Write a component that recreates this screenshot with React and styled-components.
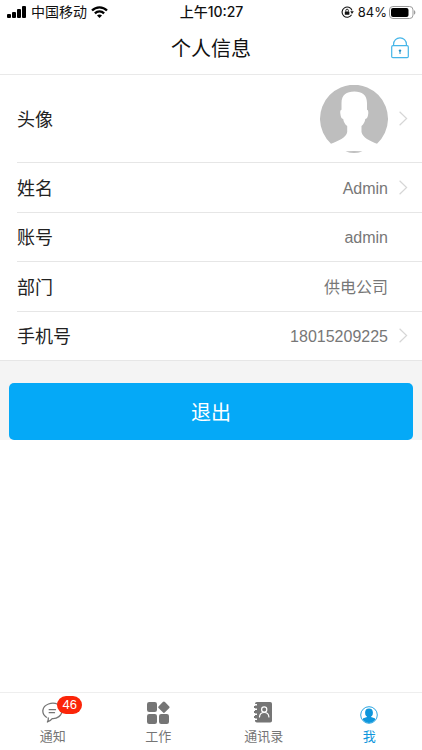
import React from "react";
import styled, { createGlobalStyle } from "styled-components";

const Global = createGlobalStyle`
  *, *::before, *::after { box-sizing: border-box; }
  body {
    margin: 0;
    background: #fff;
    color: #222;
    font-family: "Liberation Sans", "Noto Sans CJK SC", sans-serif;
  }
  h1, dl, dt, dd { margin: 0; font-weight: 400; }
  svg { display: block; }
`;

const Page = styled.div`
  min-height: 100vh;
  display: flex;
  flex-direction: column;
`;

const StatusBar = styled.div`
  height: 24px;
  padding: 0 6px 0 7px;
  display: grid;
  grid-template-columns: 1fr auto 1fr;
  align-items: center;
  color: #111;
  font-family: Inter, "Noto Sans CJK SC", sans-serif;
  font-size: 13px;
  line-height: 20px;
`;

const StatusGroup = styled.div`
  display: flex;
  align-items: center;
  gap: ${(p) => p.$gap}px;
  justify-content: ${(p) => (p.$end ? "flex-end" : "flex-start")};
`;

const Carrier = styled.span`
  font-size: 14px;
`;

const Clock = styled.time`
  font-size: 14px;
  font-weight: 500;
`;

const Header = styled.header`
  height: 51px;
  padding: 0 13px;
  display: grid;
  grid-template-columns: 1fr auto 1fr;
  align-items: center;
  border-bottom: 1px solid #e9e9e9;
`;

const Title = styled.h1`
  grid-column: 2;
  font-size: 20px;
  line-height: 30px;
  color: #111;
`;

const IconButton = styled.button`
  justify-self: end;
  padding: 0 0 2px;
  border: 0;
  background: none;
  cursor: pointer;
`;

const Main = styled.main`
  flex: 1;
`;

const InfoList = styled.dl`
  min-height: 286px;
  display: grid;
  grid-template-rows: 87px repeat(4, 1fr);
  padding-left: 17px;
  border-bottom: 1px solid #e6e6e6;
`;

const Row = styled.div`
  display: flex;
  align-items: center;
  padding-right: 14px;

  & + & { border-top: 1px solid #e6e6e6; }
`;

const Label = styled.dt`
  flex: 1;
  padding-top: 3px;
  font-size: 18px;
  line-height: 26px;
`;

const Value = styled.dd`
  color: #777;
  font-size: 16px;
  line-height: 24px;
`;

const ValueText = styled.span`
  display: block;
  padding-top: 3px;
`;

const ChevronSlot = styled.span`
  width: 20px;
  display: flex;
  justify-content: flex-end;
`;

const Footer = styled.div`
  padding: 22px 9px 0;
  background: #f4f4f4;
`;

const LogoutButton = styled.button`
  display: block;
  width: 100%;
  height: 57px;
  border: 0;
  border-radius: 5px;
  background: #05a9f7;
  color: #fff;
  font: inherit;
  font-size: 20px;
  cursor: pointer;
`;

const TabBar = styled.nav`
  height: 58px;
  display: grid;
  grid-template-columns: repeat(4, 1fr);
  border-top: 1px solid #eee;
`;

const Tab = styled.a`
  display: flex;
  flex-direction: column;
  align-items: center;
  padding-top: 8px;
  color: ${(p) => (p.$active ? "#0e96dc" : "#757575")};
  font-size: 13px;
  line-height: 22px;
  text-decoration: none;
`;

const TabIcon = styled.span`
  position: relative;
  height: 25px;
`;

const Badge = styled.span`
  position: absolute;
  top: -5px;
  left: 15px;
  width: 25px;
  height: 18px;
  border-radius: 9px;
  background: #fb2509;
  color: #fff;
  font-size: 13px;
  line-height: 18px;
  text-align: center;
`;

const SignalIcon = () => (
  <svg width="20" height="12" viewBox="0 0 20 12" fill="#000" aria-hidden="true">
    <rect x="0" y="8" width="4" height="4" rx="1" />
    <rect x="5" y="6" width="4" height="6" rx="1" />
    <rect x="10" y="3" width="4" height="9" rx="1" />
    <rect x="15" y="0" width="4" height="12" rx="1" />
  </svg>
);

const WifiIcon = () => (
  <svg width="17" height="12" viewBox="0 0 17 12" fill="none" stroke="#000" strokeWidth="2.3" aria-hidden="true">
    <path d="M1 4.5C5.2.2 11.8.2 16 4.5" />
    <path d="M3.9 7.4c2.6-2.6 6.6-2.6 9.2 0" />
    <path d="M8.5 12 6 9.4c1.4-1.3 3.6-1.3 5 0z" fill="#000" stroke="none" />
  </svg>
);

const RotationLockIcon = () => (
  <svg width="13" height="12" viewBox="0 0 13 12" fill="none" stroke="#111" aria-hidden="true">
    <path d="M10.6 8.7A5.1 5.1 0 1 1 11 4.4" strokeWidth="1.1" />
    <path d="M9.3 5.3h3.5L11 8z" fill="#111" stroke="none" />
    <rect x="3.8" y="5.4" width="4.6" height="3.3" rx=".5" fill="#111" stroke="none" />
    <path d="M4.8 5.6V4.5a1.3 1.3 0 0 1 2.6 0v1.1" strokeWidth=".9" />
  </svg>
);

const BatteryIcon = () => (
  <svg width="27" height="13" viewBox="0 0 27 13" aria-hidden="true">
    <rect x=".5" y=".5" width="23.5" height="12" rx="3.4" fill="none" stroke="#9b9b9b" />
    <rect x="2" y="2" width="17.5" height="9" rx="2" fill="#000" />
    <path d="M25 4.3c1.8.6 1.8 3.8 0 4.4z" fill="#9b9b9b" />
  </svg>
);

const LockIcon = () => (
  <svg width="18" height="22" viewBox="0 0 18 22" fill="none" stroke="#45b5e8" aria-hidden="true">
    <rect x=".7" y="8.7" width="16.6" height="12" rx="1.2" strokeWidth="1.2" />
    <path d="M2.6 8.5V7.2a6.4 6.4 0 0 1 12.8 0v1.3" strokeWidth="1.2" />
    <circle cx="9" cy="13.6" r="1.2" fill="#2a91c4" stroke="none" />
    <path d="M9 13.5V17" stroke="#2a91c4" />
  </svg>
);

const AvatarPicture = () => (
  <svg width="68" height="68" viewBox="0 0 68 68" role="img" aria-label="头像">
    <path
      d="M11 58.8A34 34 0 1 1 57 58.8C50 56 42.5 52.5 41.5 47V41C43.5 39.5 44.8 37 45.3 34C47.2 33.5 47.8 32 48.2 29C48.5 26.5 48.2 25 47 24.7V18C47 10 42 6.5 34.3 6.5C26.5 6.5 21.500 10 21.500 18V24.700C20.300 25 20 26.500 20.400 29C20.800 32 21.300 33.500 23.200 34C23.700 37 25 39.500 27.200 41V47C26.500 52.500 18 56 11 58.800Z"
      fill="#bebebe"
    />
    <path d="M25.5 66.5Q34 66 42.5 66.5Q34 69 25.5 66.5Z" fill="#aaa" />
  </svg>
);

const Chevron = () => (
  <svg width="9" height="15" viewBox="0 0 9 15" fill="none" stroke="#d6d6d6" strokeWidth="1.2" aria-hidden="true">
    <path d="m.6.8 7 6.7-7 6.7" />
  </svg>
);

const MessageIcon = () => (
  <svg width="21" height="22" viewBox="0 0 21 22" fill="none" stroke="#757575" strokeWidth="1.3" strokeLinecap="round" strokeLinejoin="round" aria-hidden="true">
    <path d="M4.4 16.2C-1 12.5-.2 5.400 6.500 3C13 .6 20 3.800 20 9.600C20 14.600 15 18 10.200 17.600C9 19.200 7.500 20.200 5.400 21C6.200 19.500 6.500 18.200 6.200 17" />
    <path d="M7.200 8.700h6.300M7.200 11.700h5.300" />
  </svg>
);

const AppsIcon = () => (
  <svg width="23" height="23" viewBox="0 0 23 23" fill="#757575" aria-hidden="true">
    <rect x="0" y="1" width="10" height="10" rx="2.2" />
    <rect x="0" y="13" width="10" height="10" rx="2.2" />
    <rect x="12" y="13" width="10" height="10" rx="2.2" />
    <rect x="12.5" y="1.8" width="8.8" height="8.8" rx="1.5" transform="rotate(45 16.9 6.2)" />
  </svg>
);

const ContactsIcon = () => (
  <svg width="19" height="22" viewBox="0 0 19 22" fill="none" aria-hidden="true">
    <rect x="1" y="1" width="17" height="20.5" rx="1.8" fill="#757575" />
    <path d="M0 3.700h3M0 8.200h3M0 13.200h3M0 18.200h3" stroke="#fff" strokeWidth="1.600" />
    <path d="M0 6h3M0 11h3M0 16h3" stroke="#757575" strokeWidth="2" />
    <g stroke="#fff" strokeWidth="1.2" strokeLinecap="round">
      <circle cx="10.2" cy="8.5" r="2.600" />
      <path d="M5.500 16c.4-6 9-6 9.400 0" />
    </g>
  </svg>
);

const ProfileIcon = () => (
  <svg width="18" height="23" viewBox="0 0 18 23" aria-hidden="true">
    <circle cx="9" cy="14" r="8.3" fill="none" stroke="#2ba5e1" />
    <ellipse cx="9" cy="11.7" rx="3.9" ry="4.3" fill="#0e96dc" />
    <path d="M7 14.3h4v1.8l3.7 1.2c.6.3.7 1.2 0 2a7.5 7.500 0 0 1-11.4 0c-.7-.8-.6-1.7 0-2L7 16.1z" fill="#0e96dc" />
  </svg>
);

const rows = [
  { label: "头像", picture: <AvatarPicture />, editable: true },
  { label: "姓名", text: "Admin", editable: true },
  { label: "账号", text: "admin" },
  { label: "部门", text: "供电公司" },
  { label: "手机号", text: "18015209225", editable: true },
];

const tabs = [
  { label: "通知", Icon: MessageIcon, badge: 46 },
  { label: "工作", Icon: AppsIcon },
  { label: "通讯录", Icon: ContactsIcon },
  { label: "我", Icon: ProfileIcon, active: true },
];

export default function App() {
  return (
    <Page>
      <Global />
      <StatusBar>
        <StatusGroup $gap={4}>
          <SignalIcon />
          <Carrier>中国移动</Carrier>
          <WifiIcon />
        </StatusGroup>
        <Clock>上午10:27</Clock>
        <StatusGroup $gap={4} $end>
          <RotationLockIcon />
          <StatusGroup $gap={2}>
            <span>84%</span>
            <BatteryIcon />
          </StatusGroup>
        </StatusGroup>
      </StatusBar>
      <Header>
        <Title>个人信息</Title>
        <IconButton type="button" aria-label="修改密码">
          <LockIcon />
        </IconButton>
      </Header>
      <Main>
        <InfoList>
          {rows.map(({ label, picture, text, editable }) => (
            <Row key={label}>
              <Label>{label}</Label>
              <Value>{picture || <ValueText>{text}</ValueText>}</Value>
              <ChevronSlot>{editable && <Chevron />}</ChevronSlot>
            </Row>
          ))}
        </InfoList>
        <Footer>
          <LogoutButton type="button">退出</LogoutButton>
        </Footer>
      </Main>
      <TabBar>
        {tabs.map(({ label, Icon, badge, active }) => (
          <Tab key={label} href="#" $active={active} aria-current={active ? "page" : undefined}>
            <TabIcon>
              <Icon />
              {badge && <Badge>{badge}</Badge>}
            </TabIcon>
            {label}
          </Tab>
        ))}
      </TabBar>
    </Page>
  );
}
